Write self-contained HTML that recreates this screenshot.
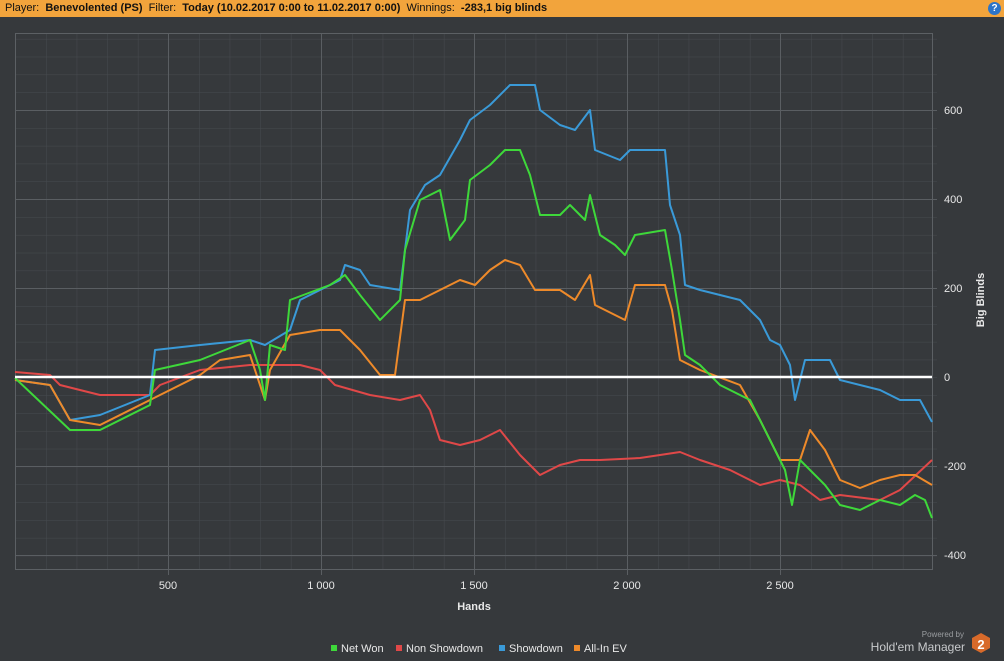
<!DOCTYPE html>
<html><head><meta charset="utf-8"><style>
body{margin:0;width:1004px;height:661px;background:#36393c;overflow:hidden;font-family:"Liberation Sans",sans-serif}
.hdr{position:absolute;left:0;top:0;width:1004px;height:17px;background:#f2a43c;font-size:11px;line-height:17px;color:#111;padding-left:5px;box-sizing:border-box}
.q{position:absolute;right:3px;top:2px;width:13px;height:13px;border-radius:50%;background:#2c74c8;color:#fff;font-size:10px;line-height:13px;text-align:center;font-weight:bold}
</style></head><body>
<div class="hdr">Player:&nbsp; <b>Benevolented (PS)</b>&nbsp; Filter:&nbsp; <b>Today (10.02.2017 0:00 to 11.02.2017 0:00)</b>&nbsp; Winnings:&nbsp; <b>-283,1 big blinds</b></div>
<div class="q">?</div>
<svg width="1004" height="661" style="position:absolute;left:0;top:0" font-family="Liberation Sans, sans-serif">
<defs>
<pattern id="pv" patternUnits="userSpaceOnUse" x="15.5" y="0" width="30.6" height="661"><line x1="0" y1="0" x2="0" y2="661" stroke="#474b4f" stroke-width="1"/></pattern>
<pattern id="ph" patternUnits="userSpaceOnUse" x="0" y="377.5" width="1004" height="17.82"><line x1="0" y1="0" x2="1004" y2="0" stroke="#474b4f" stroke-width="1"/></pattern>
</defs>
<rect x="15" y="33" width="917" height="536" fill="url(#pv)"/>
<rect x="15" y="33" width="922" height="536" fill="url(#ph)"/>
<g stroke="#5a5e62" stroke-width="1">
<line x1="168.5" y1="33" x2="168.5" y2="575"/><line x1="321.5" y1="33" x2="321.5" y2="575"/><line x1="474.5" y1="33" x2="474.5" y2="575"/><line x1="627.5" y1="33" x2="627.5" y2="575"/><line x1="780.5" y1="33" x2="780.5" y2="575"/>
<line x1="15" y1="110.5" x2="937" y2="110.5"/><line x1="15" y1="199.5" x2="937" y2="199.5"/><line x1="15" y1="288.5" x2="937" y2="288.5"/><line x1="15" y1="466.5" x2="937" y2="466.5"/><line x1="15" y1="555.5" x2="937" y2="555.5"/>
</g>
<rect x="15.5" y="33.5" width="917" height="536" fill="none" stroke="#5c6064"/>
<g fill="none" stroke-width="2" stroke-linejoin="round">
<polyline stroke="#e04848" points="15,372 50,375 60,385 100,395 150,395 160,385 200,370 250,365 300,365 320,370 335,385 370,395 400,400 420,395 430,410 440,440 460,445 480,440 500,430 520,455 540,475 560,465 580,460 600,460 640,458 680,452 700,460 730,470 760,485 780,480 800,485 820,500 840,495 880,500 900,490 932,460"/>
<polyline stroke="#3a9ad8" points="15,380 50,385 70,420 100,415 150,395 155,350 200,345 250,340 265,345 290,330 300,300 340,280 345,265 360,270 370,285 400,290 410,210 425,185 440,175 460,140 470,120 490,105 510,85 535,85 540,110 560,125 575,130 590,110 595,150 620,160 630,150 665,150 670,205 680,235 685,285 700,290 740,300 760,320 770,340 780,345 790,365 795,400 805,360 830,360 840,380 880,390 900,400 920,400 932,422"/>
<polyline stroke="#ee8a2a" points="15,380 50,385 70,420 100,425 150,400 160,395 200,375 220,360 250,355 265,400 270,370 290,335 320,330 340,330 360,350 380,375 395,375 405,300 420,300 440,290 460,280 475,285 490,270 505,260 520,265 535,290 560,290 575,300 590,275 595,305 625,320 635,285 665,285 672,310 680,360 700,370 740,385 760,420 780,460 800,460 810,430 825,450 840,480 860,488 880,480 900,475 915,475 932,485"/>
<polyline stroke="#3ed83a" points="15,378 70,430 100,430 150,405 155,370 200,360 250,340 260,370 265,400 270,345 285,350 290,300 330,285 345,275 360,295 380,320 400,300 405,250 420,200 440,190 450,240 465,220 470,180 490,165 505,150 520,150 530,175 540,215 560,215 570,205 585,220 590,195 600,235 615,245 625,255 635,235 665,230 672,270 680,320 685,355 700,365 720,385 750,400 770,440 785,470 792,505 800,460 810,470 825,485 840,505 860,510 880,500 900,505 915,495 925,500 932,518"/>
</g>
<line x1="15" y1="377" x2="932" y2="377" stroke="#fff" stroke-width="2.5"/>
<g fill="#e8e8e8" font-size="11">
<text x="168" y="589" text-anchor="middle">500</text><text x="321" y="589" text-anchor="middle">1 000</text><text x="474" y="589" text-anchor="middle">1 500</text><text x="627" y="589" text-anchor="middle">2 000</text><text x="780" y="589" text-anchor="middle">2 500</text>
<text x="944" y="114">600</text><text x="944" y="203">400</text><text x="944" y="292">200</text><text x="944" y="381">0</text><text x="944" y="470">-200</text><text x="944" y="559">-400</text>
<text x="474" y="610" text-anchor="middle" font-weight="bold">Hands</text>
<text transform="translate(984,300) rotate(-90)" text-anchor="middle" font-weight="bold">Big Blinds</text>
<rect x="331" y="645" width="6" height="6" fill="#3ed83a"/><text x="341" y="652">Net Won</text>
<rect x="396" y="645" width="6" height="6" fill="#e04848"/><text x="406" y="652">Non Showdown</text>
<rect x="499" y="645" width="6" height="6" fill="#3a9ad8"/><text x="509" y="652">Showdown</text>
<rect x="574" y="645" width="6" height="6" fill="#ee8a2a"/><text x="584" y="652">All-In EV</text>
</g>
<text x="964" y="637" fill="#9a9da0" font-size="8" text-anchor="end">Powered by</text>
<text x="965" y="651" fill="#c8cacc" font-size="12" text-anchor="end">Hold'em Manager</text>
<polygon points="981,633 990,638 990,648 981,653 972,648 972,638" fill="#d86a2a"/>
<text x="981" y="649" fill="#fff" font-size="13" font-weight="bold" text-anchor="middle">2</text>
</svg>
</body></html>
